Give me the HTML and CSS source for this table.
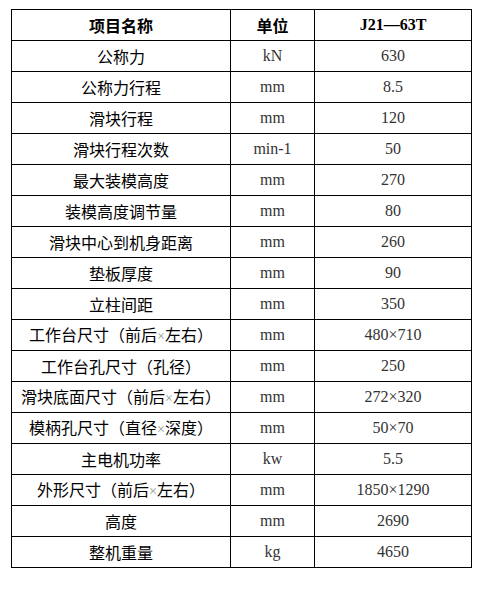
FILE: index.html
```html
<!DOCTYPE html>
<html lang="zh">
<head>
<meta charset="utf-8">
<link rel="stylesheet" href="styles.css">
</head>
<body>
<table class="spec">
<colgroup><col class="c1"><col class="c2"><col class="c3"></colgroup>
<thead>
<tr><th class="zh">项目名称</th><th class="zh">单位</th><th class="en">J21—63T</th></tr>
</thead>
<tbody>
<tr><td class="zh">公称力</td><td class="en">kN</td><td class="en">630</td></tr>
<tr><td class="zh">公称力行程</td><td class="en">mm</td><td class="en">8.5</td></tr>
<tr><td class="zh">滑块行程</td><td class="en">mm</td><td class="en">120</td></tr>
<tr><td class="zh">滑块行程次数</td><td class="en">min-1</td><td class="en">50</td></tr>
<tr><td class="zh">最大装模高度</td><td class="en">mm</td><td class="en">270</td></tr>
<tr><td class="zh">装模高度调节量</td><td class="en">mm</td><td class="en">80</td></tr>
<tr><td class="zh">滑块中心到机身距离</td><td class="en">mm</td><td class="en">260</td></tr>
<tr><td class="zh">垫板厚度</td><td class="en">mm</td><td class="en">90</td></tr>
<tr><td class="zh">立柱间距</td><td class="en">mm</td><td class="en">350</td></tr>
<tr><td class="zh">工作台尺寸（前后<span class="x">×</span>左右）</td><td class="en">mm</td><td class="en">480×710</td></tr>
<tr><td class="zh">工作台孔尺寸（孔径）</td><td class="en">mm</td><td class="en">250</td></tr>
<tr><td class="zh">滑块底面尺寸（前后<span class="x">×</span>左右）</td><td class="en">mm</td><td class="en">272×320</td></tr>
<tr><td class="zh">模柄孔尺寸（直径<span class="x">×</span>深度）</td><td class="en">mm</td><td class="en">50×70</td></tr>
<tr><td class="zh">主电机功率</td><td class="en">kw</td><td class="en">5.5</td></tr>
<tr><td class="zh">外形尺寸（前后<span class="x">×</span>左右）</td><td class="en">mm</td><td class="en">1850×1290</td></tr>
<tr><td class="zh">高度</td><td class="en">mm</td><td class="en">2690</td></tr>
<tr><td class="zh">整机重量</td><td class="en">kg</td><td class="en">4650</td></tr>
</tbody>
</table>
</body>
</html>
```
FILE: styles.css
```css
html, body {
  margin: 0;
  padding: 0;
  background: #fff;
}
body {
  padding: 9px 0 0 11px;
}
.spec {
  border-collapse: collapse;
  table-layout: fixed;
  width: 460px;
}
.c1 { width: 219px; }
.c2 { width: 84px; }
.c3 { width: 157px; }
.spec th,
.spec td {
  border: 1px solid #000;
  height: 30px;
  padding: 0;
  text-align: center;
  vertical-align: middle;
  font-size: 16px;
  line-height: 20px;
  white-space: nowrap;
}
.zh {
  font-family: "Noto Sans CJK SC", sans-serif;
  color: #000;
}
.en {
  font-family: "Liberation Serif", serif;
  color: #333;
}
th.zh, th.en {
  font-weight: bold;
  color: #000;
}
.x {
  font-family: "Liberation Serif", serif;
  color: #8a9a8a;
  font-size: 14px;
}
```
